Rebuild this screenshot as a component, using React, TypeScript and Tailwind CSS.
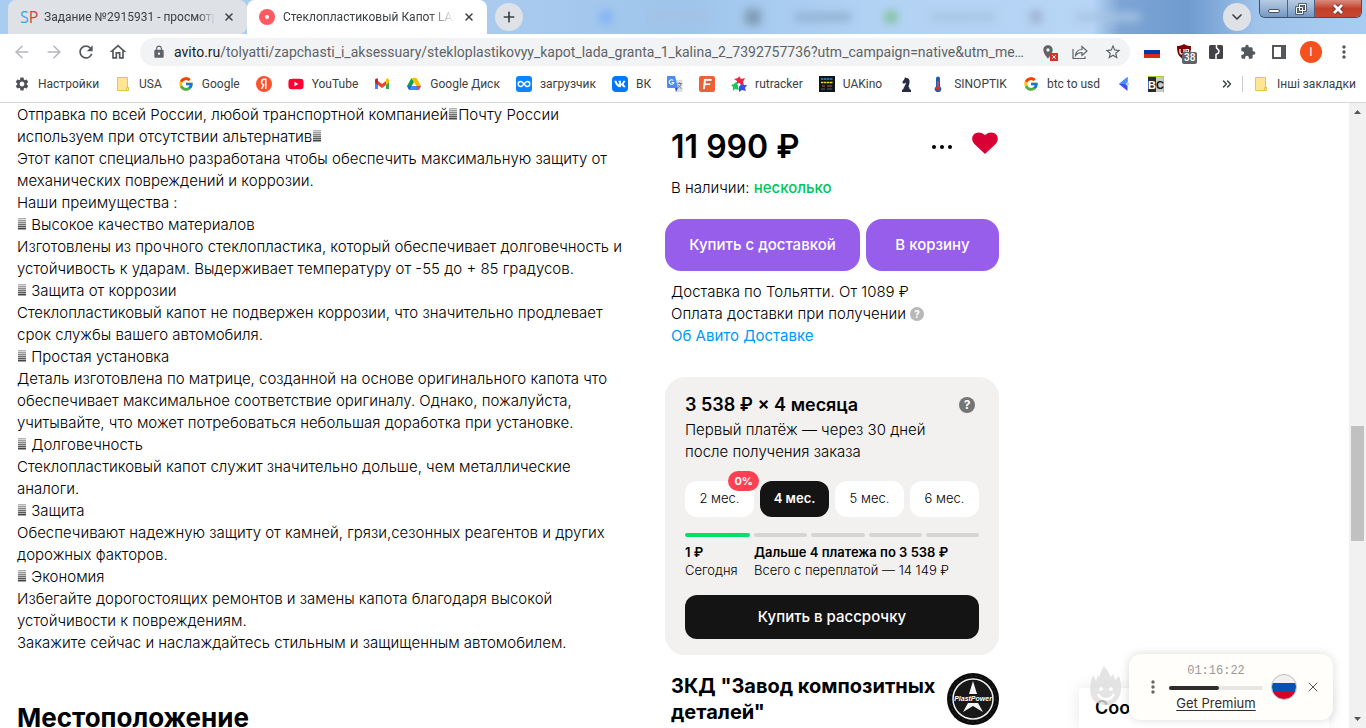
import React from "react";
import { ArrowLeft, ArrowRight, X, Plus, ChevronDown, ChevronsRight } from "lucide-react";
import { FcGoogle } from "react-icons/fc";
import {
  MdRefresh,
  MdOutlineHome,
  MdLock,
  MdStarBorder,
  MdExtension,
  MdMoreVert,
  MdSettings,
  MdLocationOn,
} from "react-icons/md";
import { FaYoutube, FaVk } from "react-icons/fa";

const uiFont = "font-['Roboto','Noto_Sans',sans-serif]";

function FolderIcon() {
  return (
    <svg viewBox="0 0 16 16" className="size-4" aria-hidden="true">
      <path d="M2.5 1.5h10v10h1v3h-11z" fill="#ffe594" stroke="#e8c44e" />
      <path d="M11.5 14.500v-3h2v3z" fill="#ffe594" stroke="#e8c44e" />
    </svg>
  );
}

function GmailIcon() {
  return (
    <svg viewBox="0 0 16 16" className="size-4" aria-hidden="true">
      <path d="M1 4v9h3V6z" fill="#4285f4" />
      <path d="M12 6v7h3V4z" fill="#34a853" />
      <path d="M4 5v4l4 3 4-3V5L8 8z" fill="#ea4335" />
      <path d="M1 4.500C1 2.500 3 2.200 4 3v6L1 6.500z" fill="#c5221f" />
      <path d="M15 4.500C15 2.500 13 2.200 12 3v6l3-2.500z" fill="#fbbc04" />
    </svg>
  );
}

function DriveIcon() {
  return (
    <svg viewBox="0 0 16 16" className="size-4" aria-hidden="true">
      <path d="M5.500 2 1 10l2.200 4L8 6z" fill="#0f9d58" />
      <path d="M5.500 2h5L15 10h-4.700z" fill="#fbbc04" />
      <path d="M3.200 14 5.500 10H15l-2.200 4z" fill="#4285f4" />
      <path d="M5.500 10 3.200 14 1 10z" fill="#1967d2" />
      <path d="M12.600 10H15l-2.200 4-2.300-4z" fill="#ea4335" />
    </svg>
  );
}

function YandexIcon() {
  return (
    <svg viewBox="0 0 16 16" className="size-4" aria-hidden="true">
      <circle cx="8" cy="8" r="8" fill="#fc5230" />
      <path d="M9.800 13V3.200H8.500C6.500 3.200 5.500 4.300 5.500 5.900c0 1.700.9 2.500 2.700 3.100M8 8.500 5.500 13" fill="none" stroke="#fff" strokeWidth="1.500" />
    </svg>
  );
}

function CloudIcon() {
  return (
    <svg viewBox="0 0 16 16" className="size-4" aria-hidden="true">
      <rect width="16" height="16" rx="3" fill="#0a84ff" />
      <path d="M8 8C6.500 6 5.700 5.500 4.700 5.500a2.500 2.500 0 0 0 0 5C6 10.500 6.800 9.500 8 8s2-2.500 3.300-2.500a2.500 2.500 0 0 1 0 5C10 10.500 9.500 10 8 8z" fill="none" stroke="#fff" strokeWidth="1.500" />
    </svg>
  );
}

function VkIcon() {
  return (
    <span className="flex size-4 items-center justify-center rounded bg-[#0077ff] text-white">
      <FaVk className="size-3" />
    </span>
  );
}

function TranslateIcon() {
  return (
    <svg viewBox="0 0 16 16" className="size-4" aria-hidden="true">
      <path d="M6 4h9.500v12H9z" fill="#dbdfe4" />
      <path d="M0 1Q0 0 1 0h7l3 12H1Q0 12 0 11z" fill="#4d8bf4" />
      <path d="m8 12 3 0-2 4z" fill="#2a56c6" />
      <path d="M6.300 4.500A2.300 2.300 0 1 0 6.800 6.500H4.600" fill="none" stroke="#fff" strokeWidth="1.100" />
      <path d="M10.500 7.500h4.500M12.500 6.500v1M14 7.500c-.5 2.500-2 4-3 4.500M11.500 9c.5 1.500 1.500 2.500 3 3.500" fill="none" stroke="#6f7c88" />
    </svg>
  );
}

function FIcon() {
  return (
    <svg viewBox="0 0 16 16" className="size-4" aria-hidden="true">
      <rect width="16" height="16" rx="2" fill="#ef6135" />
      <path d="M3.500 13.500 4.500 3.500C4.600 2.800 5 2.500 5.500 2.500h7.500v2.800H7.300L7.100 7H12l-.5 2.500H6.700l-.5 4z" fill="#fff3e8" stroke="#a93c1b" strokeWidth=".5" />
    </svg>
  );
}

function RutrackerIcon() {
  return (
    <svg viewBox="0 0 16 16" className="size-4" aria-hidden="true">
      <path d="m8 0 2 3 4-1-2 4 1 3-5-1-3 1 1-4-3-2 4-1z" fill="#ee2545" />
      <path d="m5 6 3 2-1 3 1 3-4-1-2 2V11L0 9l3-1z" fill="#16c95b" />
      <path d="m10 7 2 2h4l-2 3 1 3-4-1-3 2V11z" fill="#3b4fe0" />
      <circle cx="8" cy="8.500" r="1.500" fill="#fff" />
    </svg>
  );
}

function UaKinoIcon() {
  return (
    <svg viewBox="0 0 16 16" className="size-4" aria-hidden="true">
      <rect width="16" height="16" fill="#10141c" />
      <path d="M2 3h12" stroke="#2f86d6" strokeWidth="1.500" strokeDasharray="2.500 .5" />
      <path d="M2 6.500h12" stroke="#f3d31a" strokeWidth="1.500" strokeDasharray="2.500 .5" />
      <path d="M3 10h3M8 10h5" stroke="#b8683c" />
      <path d="M2 13h4M8 13h5" stroke="#596070" />
    </svg>
  );
}

function KnightIcon() {
  return (
    <svg viewBox="0 0 16 16" className="size-4" aria-hidden="true">
      <path d="M7 1l1 1c3 0 4 2 3.500 5L10.500 10.500l1 1.500v1l1.500 1v2H4v-2l1.500-1v-1l1-1.500C7 9 8 8 8 6.500L6.500 7.500 5 7.500 4.300 6 6.500 3z" fill="#282b45" />
    </svg>
  );
}

function ThermometerIcon() {
  return (
    <svg viewBox="0 0 16 16" className="size-4" aria-hidden="true">
      <path d="M6 2.500a2 2 0 0 1 4 0v8a3.200 3.200 0 1 1-4 0z" fill="#1b5fae" />
      <path d="M8 5v7" stroke="#e8483b" strokeWidth="1.500" />
      <circle cx="8" cy="12.500" r="2" fill="#d93025" />
    </svg>
  );
}

function BlueArrowIcon() {
  return (
    <svg viewBox="0 0 16 16" className="size-4" aria-hidden="true">
      <path d="M11.500 1v5L9.500 8l2 2v5L3 8z" fill="#3d4eff" />
      <path d="M11.500 1v5L9.500 8H3z" fill="#4b93ff" />
      <path d="m11.500 6 2 2-2 2-2-2z" fill="#b5ccff" />
    </svg>
  );
}

function BcIcon() {
  return (
    <svg viewBox="0 0 16 16" className="size-4" aria-hidden="true">
      <rect width="16" height="16" fill="#c9cbc8" />
      <rect width="8" height="16" fill="#2b2b2b" />
      <path d="M0 .5h15.500V16" fill="none" stroke="#9fd02f" />
      <g fontFamily="Liberation Sans, sans-serif" fontWeight="700" fontSize="11">
        <text x="0" y="12.500" fill="#fff">B</text>
        <text x="8" y="12.500" fill="#111">C</text>
      </g>
    </svg>
  );
}

const bookmarks: { icon: React.ReactNode; label: string; name?: string }[] = [
  { icon: <MdSettings className="size-4 text-[#4d5156]" />, label: "Настройки" },
  { icon: <FolderIcon />, label: "USA" },
  { icon: <FcGoogle className="size-4" />, label: "Google" },
  { icon: <YandexIcon />, label: "", name: "Яндекс" },
  { icon: <FaYoutube className="size-4 text-[#ff0033]" />, label: "YouTube" },
  { icon: <GmailIcon />, label: "", name: "Gmail" },
  { icon: <DriveIcon />, label: "Google Диск" },
  { icon: <CloudIcon />, label: "загрузчик" },
  { icon: <VkIcon />, label: "ВК" },
  { icon: <TranslateIcon />, label: "", name: "Переводчик" },
  { icon: <FIcon />, label: "", name: "F" },
  { icon: <RutrackerIcon />, label: "rutracker" },
  { icon: <UaKinoIcon />, label: "UAKino" },
  { icon: <KnightIcon />, label: "", name: "Chess" },
  { icon: <ThermometerIcon />, label: "SINOPTIK" },
  { icon: <FcGoogle className="size-4" />, label: "btc to usd" },
  { icon: <BlueArrowIcon />, label: "", name: "Arrow" },
  { icon: <BcIcon />, label: "", name: "BC" },
];

function TabStrip() {
  return (
    <div className="relative flex h-[34px] bg-[linear-gradient(90deg,#a9cdf0_0%,#aacbee_35%,#9fc5ec_50%,#b3d3f4_65%,#b7d5f5_80%,#7ea5d4_82%,#6f9bd0_87%,#9fc3ea_92%,#a9cdf2_100%)] pl-2">
      <div className="absolute inset-y-0 left-[520px] flex w-[700px] items-center justify-between px-20 blur-xs" aria-hidden="true">
        <span className="size-3 bg-[#7eb1f6]" />
        <span className="h-2 w-16 bg-[#a3c2e2]" />
        <span className="size-4 bg-[#7f9cb4]" />
        <span className="h-2 w-14 bg-[#91b0d0]" />
        <span className="size-3 bg-[#81c19a]" />
        <span className="h-2 w-16 bg-[#a6c4e3]" />
        <span className="size-3 bg-[#9eb0d0]" />
        <span className="h-2 w-16 bg-[#a6c4e3]" />
      </div>
      <div className="flex w-[239px] items-center rounded-t-lg rounded-br-lg bg-[#dee1e6] pr-2 pl-3">
        <span className="w-4 font-['Open_Sans',sans-serif] text-base leading-none text-[#3ba7dc]">
          S<span className="text-[#cf4647]">P</span>
        </span>
        <span className="ml-2 flex-1 overflow-hidden mask-r-from-90% text-xs whitespace-nowrap text-[#3c4043]">Задание №2915931 - просмотр</span>
        <button aria-label="Закрыть вкладку" className="ml-1 p-1 text-[#3c4043]">
          <X className="size-3" strokeWidth={3} />
        </button>
      </div>
      <div className="relative flex w-60 items-center rounded-t-lg bg-white pr-2 pl-3">
        <span className="flex size-4 items-center justify-center rounded-full bg-[#ff5a5f]">
          <span className="size-1 rounded-full bg-white" />
        </span>
        <span className="ml-2 flex-1 overflow-hidden mask-r-from-85% text-xs whitespace-nowrap text-[#3c4043]">Стеклопластиковый Капот LADA</span>
        <button aria-label="Закрыть вкладку" className="ml-1 p-1 text-[#3c4043]">
          <X className="size-3" strokeWidth={3} />
        </button>
      </div>
      <button aria-label="Новая вкладка" className="relative mt-[3px] ml-2 flex size-7 items-center justify-center rounded-full bg-[#dee1e6] text-[#3c4043]">
        <Plus className="size-4" strokeWidth={2.500} />
      </button>
      <div className="relative ml-auto flex items-start pr-1">
        <button aria-label="Поиск вкладок" className="mt-[3px] mr-2 flex size-7 items-center justify-center rounded-full bg-[#dee1e6] text-[#3c4043]">
          <ChevronDown className="size-4" strokeWidth={2.500} />
        </button>
        <div className="flex h-[18px] overflow-hidden rounded-b-md border border-t-0 border-[#3d4f6b]">
          <button aria-label="Свернуть" className="flex w-7 items-end justify-center border-r border-[#4b6285] bg-linear-to-b from-[#b7cbe3] via-[#98b3d2] to-[#7396c4] pb-1">
            <span className="h-1 w-3 rounded-xs border border-[#4a4f5d] bg-white" />
          </button>
          <button aria-label="Восстановить" className="flex w-[27px] items-center justify-center border-r border-[#4b6285] bg-linear-to-b from-[#b7cbe3] via-[#98b3d2] to-[#7396c4]">
            <svg viewBox="0 0 12 12" className="size-3">
              <path d="M4.500 1.500h6v6h-6zM1.500 4.500h6v6h-6z" fill="none" stroke="#3f485a" strokeWidth="2.500" />
              <path d="M4.500 1.500h6v6h-6zM1.500 4.500h6v6h-6z" fill="none" stroke="#fff" />
            </svg>
          </button>
          <button aria-label="Закрыть" className="flex w-[46px] items-center justify-center bg-linear-to-b from-[#d98a7c] via-[#c2402b] to-[#c7462f]">
            <svg viewBox="0 0 12 12" className="size-3">
              <path d="m2 2 8 8m0-8-8 8" stroke="#5a2b2b" strokeWidth="4.500" />
              <path d="m2 2 8 8m0-8-8 8" stroke="#fff" strokeWidth="2.800" />
            </svg>
          </button>
        </div>
      </div>
    </div>
  );
}

function Toolbar() {
  return (
    <div className="flex h-9 items-center pr-3 pl-3">
      <div className="flex items-center gap-3 text-[#54585d]">
        <button aria-label="Назад" className="text-[#b5b7ba]"><ArrowLeft className="size-5" strokeWidth={1.800} /></button>
        <button aria-label="Вперёд" className="text-[#b5b7ba]"><ArrowRight className="size-5" strokeWidth={1.800} /></button>
        <button aria-label="Обновить"><MdRefresh className="size-5" /></button>
        <button aria-label="Домой"><MdOutlineHome className="size-5" /></button>
      </div>
      <div className="ml-3 flex h-7 min-w-0 flex-1 items-center rounded-full bg-[#f1f3f4] pr-2 pl-3 text-[#5f6368]">
        <MdLock className="size-3.5 shrink-0" />
        <div className="ml-2 min-w-0 flex-1 truncate text-sm whitespace-nowrap">
          <span className="text-[#202124]">avito.ru</span>/tolyatti/zapchasti_i_aksessuary/stekloplastikovyy_kapot_lada_granta_1_kalina_2_7392757736?utm_campaign=native&amp;utm_mediu...
        </div>
        <div className="ml-3 flex items-center gap-4">
          <button aria-label="Геоданные" className="relative">
            <MdLocationOn className="size-4" />
            <span className="absolute right-[-2px] bottom-[-1px] flex size-2 items-center justify-center bg-[#d93025] text-white">
              <X className="size-1.5" strokeWidth={4} />
            </span>
          </button>
          <button aria-label="Поделиться">
            <svg viewBox="0 0 16 16" className="size-4" fill="none" stroke="currentColor" strokeWidth="1.200">
              <path d="M1 5v9.500h12V12.500M3.500 11.500C4 7.500 6.500 5.500 10 5.500V2.500l5 4.500-5 4.500V8.500c-3 0-5 1-6.500 3z" />
            </svg>
          </button>
          <button aria-label="Добавить в закладки"><MdStarBorder className="size-[18px]" /></button>
        </div>
      </div>
      <div className="ml-3.5 flex items-center gap-4 text-[#54585d]">
        <button aria-label="VPN" className="flex h-3 w-4 flex-col">
          <span className="w-full flex-1 bg-white" />
          <span className="w-full flex-1 bg-[#0039a6]" />
          <span className="w-full flex-1 bg-[#d52b1e]" />
        </button>
        <button aria-label="uBlock" className="relative">
          <svg viewBox="0 0 16 16" className="size-4">
            <path d="M8 0c2 1.500 4.500 2 7 2 0 7-1 10-7 14C2 12 1 9 1 2c2.500 0 5-.5 7-2z" fill="#800000" />
            <path d="M4 5v3a2 2 0 0 0 4 0V5m2 6V5.500h2.500V8H10" fill="none" stroke="#fff" strokeWidth="1.200" />
          </svg>
          <span className="absolute top-2 left-1.5 rounded-xs bg-[#5f6368] px-0.5 text-[10px] leading-3 font-medium text-white">38</span>
        </button>
        <button aria-label="Расширение">
          <svg viewBox="0 0 16 16" className="size-4">
            <rect x="1" y="1" width="14" height="14" rx="1.500" fill="#414347" />
            <path d="M8.500 0v4L11 6.500 10.500 9 8 10.500V16" fill="none" stroke="#fff" strokeWidth="1.500" />
          </svg>
        </button>
        <button aria-label="Расширения"><MdExtension className="size-4" /></button>
        <button aria-label="Боковая панель" className="flex size-4 items-center">
          <span className="size-3.5 border-2 border-r-5 border-current" />
        </button>
        <button aria-label="Профиль" className="-mx-1 flex size-[22px] items-center justify-center rounded-full bg-[#f4511e] text-xs text-white">I</button>
        <button aria-label="Меню"><MdMoreVert className="size-5" /></button>
      </div>
    </div>
  );
}

function BookmarksBar() {
  return (
    <nav className="flex h-[33px] items-center border-b border-[#d5d7da] pb-1 text-xs text-[#3c4043]">
      <div className="flex min-w-0 flex-1 items-center gap-4 overflow-hidden pl-3.5 whitespace-nowrap">
        {bookmarks.map((b, i) => (
          <a key={i} href="#" aria-label={b.name} className="flex shrink-0 items-center gap-2">
            {b.icon}
            {b.label && <span>{b.label}</span>}
          </a>
        ))}
      </div>
      <button aria-label="Другие закладки" className="px-2"><ChevronsRight className="size-3.5" strokeWidth={2.500} /></button>
      <a href="#" className="flex shrink-0 items-center gap-2 border-l border-[#c9cbce] pr-2.5 pl-2.5">
        <FolderIcon />
        Інші закладки
      </a>
    </nav>
  );
}

function Tofu() {
  return <span className="mx-px inline-block h-3 w-2 bg-[repeating-linear-gradient(180deg,transparent_0_1px,#fff8_1px_2px),linear-gradient(180deg,#bbb,#333)]" aria-hidden="true" />;
}

function Description() {
  return (
    <section className="text-[15px] leading-[22px] font-light whitespace-nowrap">
      <p>
        Отправка по всей России, любой транспортной компанией<Tofu />Почту России
        <br />
        используем при отсутствии альтернатив<Tofu />
      </p>
      <p>
        Этот капот специально разработана чтобы обеспечить максимальную защиту от
        <br />
        механических повреждений и коррозии.
      </p>
      <p>Наши преимущества :</p>
      <p><Tofu /> Высокое качество материалов</p>
      <p>
        Изготовлены из прочного стеклопластика, который обеспечивает долговечность и
        <br />
        устойчивость к ударам. Выдерживает температуру от -55 до + 85 градусов.
      </p>
      <p><Tofu /> Защита от коррозии</p>
      <p>
        Стеклопластиковый капот не подвержен коррозии, что значительно продлевает
        <br />
        срок службы вашего автомобиля.
      </p>
      <p><Tofu /> Простая установка</p>
      <p>
        Деталь изготовлена по матрице, созданной на основе оригинального капота что
        <br />
        обеспечивает максимальное соответствие оригиналу. Однако, пожалуйста,
        <br />
        учитывайте, что может потребоваться небольшая доработка при установке.
      </p>
      <p><Tofu /> Долговечность</p>
      <p>
        Стеклопластиковый капот служит значительно дольше, чем металлические
        <br />
        аналоги.
      </p>
      <p><Tofu /> Защита</p>
      <p>
        Обеспечивают надежную защиту от камней, грязи,сезонных реагентов и других
        <br />
        дорожных факторов.
      </p>
      <p><Tofu /> Экономия</p>
      <p>
        Избегайте дорогостоящих ремонтов и замены капота благодаря высокой
        <br />
        устойчивости к повреждениям.
      </p>
      <p>Закажите сейчас и наслаждайтесь стильным и защищенным автомобилем.</p>
    </section>
  );
}

function PlastPowerLogo() {
  return (
    <svg viewBox="0 0 52 52" className="size-[52px] shrink-0" role="img" aria-label="PlastPower">
      <circle cx="26" cy="26" r="26" fill="#0c0c0c" />
      <circle cx="26" cy="26" r="23" fill="none" stroke="#303030" strokeDasharray="2 3" />
      <circle cx="26" cy="26" r="20" fill="#181818" stroke="#efefef" strokeWidth="1.500" />
      <path d="M26 8 30 21H22zM21 30h10l5 9-10-6-10 6z" fill="#f4f4f4" />
      <text x="26" y="28" fill="#fff" fontSize="7" fontWeight="700" fontStyle="italic" textAnchor="middle" fontFamily="Liberation Sans, sans-serif">PlastPower</text>
    </svg>
  );
}

function Installments() {
  const months = [2, 4, 5, 6];
  return (
    <section className="mt-[30px] rounded-[20px] bg-[#f2f1f0] px-5 py-4">
      <div className="flex items-center justify-between pr-1">
        <h3 className="text-lg leading-6 font-semibold">3 538 ₽ × 4 месяца</h3>
        <button aria-label="Подробнее" className="size-4 rounded-full bg-[#757575] text-xs leading-4 font-bold text-white">?</button>
      </div>
      <p className="mt-0.5 text-[15px] leading-[22px] font-light">
        Первый платёж — через 30 дней
        <br />
        после получения заказа
      </p>
      <div className="mt-[18px] grid grid-cols-4 gap-1.5 text-[13px]">
        {months.map((m) => (
          <button
            key={m}
            className={m === 4 ? "relative h-9 rounded-xl bg-[#141414] font-semibold text-white" : "relative h-9 rounded-xl bg-white font-light"}
          >
            {m} мес.
            {m === 2 && (
              <span className="absolute top-[-10px] right-[-5px] rounded-full bg-[#ff4053] px-1.5 text-[11px] leading-5 font-bold text-white">0%</span>
            )}
          </button>
        ))}
      </div>
      <div className="mt-4 flex gap-1">
        <span className="h-1 w-[65px] rounded-full bg-[#02e068]" />
        {[1, 2, 3, 4].map((n) => (
          <span key={n} className="h-1 flex-1 rounded-full bg-[#d6d5d3]" />
        ))}
      </div>
      <div className="mt-1.5 flex text-[13px] leading-[18px] font-light whitespace-nowrap">
        <p className="w-[69px]">
          <strong className="font-semibold">1 ₽</strong>
          <br />
          Сегодня
        </p>
        <p>
          <strong className="font-semibold">Дальше 4 платежа по 3 538 ₽</strong>
          <br />
          Всего с переплатой — 14 149 ₽
        </p>
      </div>
      <button className="mt-4 block h-11 w-full rounded-xl bg-[#141414] text-[15px] font-medium text-white">Купить в рассрочку</button>
    </section>
  );
}

function Purchase() {
  return (
    <aside className="w-[334px] shrink-0">
      <div className="flex items-center pt-6 pr-px pl-1.5">
        <p className="text-[32px] leading-10 font-semibold">11 990 ₽</p>
        <button aria-label="Ещё" className="mr-5 ml-auto flex gap-1">
          <span className="size-1 rounded-full bg-black" />
          <span className="size-1 rounded-full bg-black" />
          <span className="size-1 rounded-full bg-black" />
        </button>
        <button aria-label="В избранное" className="pb-2">
          <svg viewBox="0 0 26 22" className="h-[22px] w-[26px]">
            <path d="M13 22 2.400 12C-4 5 4.500-4 13 3c8.500-7 17 2 10.600 9z" fill="#d90036" />
          </svg>
        </button>
      </div>
      <p className="mt-[10px] pl-1.5 text-[15px] leading-[22px] font-light">
        В наличии: <span className="font-medium text-[#02c45b]">несколько</span>
      </p>
      <div className="mt-5 flex gap-1.5 text-[15px] font-medium text-white">
        <button className="h-[52px] w-[195px] rounded-2xl bg-[#965eeb]">Купить с доставкой</button>
        <button className="h-[52px] flex-1 rounded-2xl bg-[#965eeb]">В корзину</button>
      </div>
      <div className="mt-[10px] pl-1.5 text-[15px] leading-[22px] font-light">
        <p>Доставка по Тольятти. От 1089 ₽</p>
        <p className="flex items-center gap-1 whitespace-nowrap">
          Оплата доставки при получении
          <button aria-label="Об оплате" className="size-3.5 rounded-full bg-[#b8b8b8] text-[10px] leading-[14px] font-bold text-white">?</button>
        </p>
        <p><a href="#" className="font-normal text-[#0099f7]">Об Авито Доставке</a></p>
      </div>
      <Installments />
      <div className="mt-[18px] flex items-center justify-between pl-1.5">
        <h3 className="text-xl leading-[26px] font-bold whitespace-nowrap">
          ЗКД "Завод композитных
          <br />
          деталей"
        </h3>
        <PlastPowerLogo />
      </div>
    </aside>
  );
}

function Overlays() {
  return (
    <div className="absolute right-0 bottom-0 h-20 w-[290px]">
      <div className="absolute bottom-0 left-[20px] h-10 w-[250px] rounded-t bg-white pt-2 pl-4 text-lg leading-6 font-semibold shadow-[0_0_16px_#0000001a]">Соо</div>
      <svg viewBox="0 0 32 40" className="absolute top-[18px] left-[31px] h-10 w-8 opacity-80" aria-hidden="true">
        <path d="M14 0c3 4 5 7 7 11l2-3 2 6 4-4c3 9 3 17-1 23-4 6-9 6-12 6S5 38 2 32C-1 25 0 17 3 9l3 6 2-6 1 3c1-5 3-8 5-12z" fill="#dedede" />
        <circle cx="11" cy="23" r="2" fill="#fff" />
        <circle cx="21" cy="23" r="2" fill="#fff" />
        <path d="M8 28c3 7 13 7 16 0" fill="none" stroke="#fff" strokeWidth="2.500" />
      </svg>
      <div className="absolute top-1.5 left-[70px] flex h-[66px] w-[204px] items-center rounded-xl bg-[#fffefb] pr-3 pl-3.5 shadow-[0_0_10px_#00000026]">
        <button aria-label="Меню" className="mr-1.5 text-[#666]"><MdMoreVert className="size-5" /></button>
        <div className="flex w-[94px] shrink-0 flex-col items-center">
          <span className="font-['Liberation_Mono',monospace] text-xs leading-4 text-[#999]">01:16:22</span>
          <span className="mt-[7px] mb-[5px] h-1 w-full rounded-full bg-[#e8e6e5]">
            <span className="block h-1 w-[50px] rounded-full bg-[#302b2d]" />
          </span>
          <a href="#" className="text-[13px] leading-4 whitespace-nowrap text-[#302b2d] underline underline-offset-2">Get Premium</a>
        </div>
        <svg viewBox="0 0 26 26" className="ml-2 size-[26px] shrink-0" role="img" aria-label="Россия">
          <clipPath id="ru"><circle cx="13" cy="13" r="12" /></clipPath>
          <g clipPath="url(#ru)">
            <path d="M0 0h26v9H0z" fill="#f0f0f0" />
            <path d="M0 9h26v8H0z" fill="#0052b4" />
            <path d="M0 17h26v9H0z" fill="#d80027" />
          </g>
          <circle cx="13" cy="13" r="12.500" fill="none" stroke="#aaa" strokeWidth=".8" />
        </svg>
        <button aria-label="Закрыть" className="ml-2 text-[#555]"><X className="size-4" strokeWidth={1.500} /></button>
      </div>
    </div>
  );
}

function Scrollbar() {
  return (
    <div className="flex w-[17px] shrink-0 flex-col items-center bg-[#f1f1f1]" aria-hidden="true">
      <svg viewBox="0 0 17 17" className="size-[17px]"><path d="m5 11 3.500-4 3.500 4z" fill="#555" /></svg>
      <div className="flex w-[13px] flex-1 flex-col">
        <span className="grow-[306]" />
        <span className="grow-[115] bg-[#c1c1c1]" />
        <span className="grow-[170]" />
      </div>
      <svg viewBox="0 0 17 17" className="size-[17px]"><path d="m5 6 3.500 4L12 6z" fill="#555" /></svg>
    </div>
  );
}

export default function App() {
  return (
    <div className="flex h-screen flex-col overflow-hidden bg-white">
      <header className={uiFont}>
        <TabStrip />
        <Toolbar />
        <BookmarksBar />
      </header>
      <div className="flex min-h-0 flex-1 font-['Inter','Liberation_Sans',sans-serif] text-black">
        <main className="relative min-w-0 flex-1 overflow-hidden">
          <div className="flex max-w-[999px] pl-[17px]">
            <div className="min-w-0 flex-1 pt-px">
              <Description />
              <h2 className="mt-12 text-[26px] leading-8 font-bold">Местоположение</h2>
            </div>
            <Purchase />
          </div>
          <Overlays />
        </main>
        <Scrollbar />
      </div>
    </div>
  );
}
